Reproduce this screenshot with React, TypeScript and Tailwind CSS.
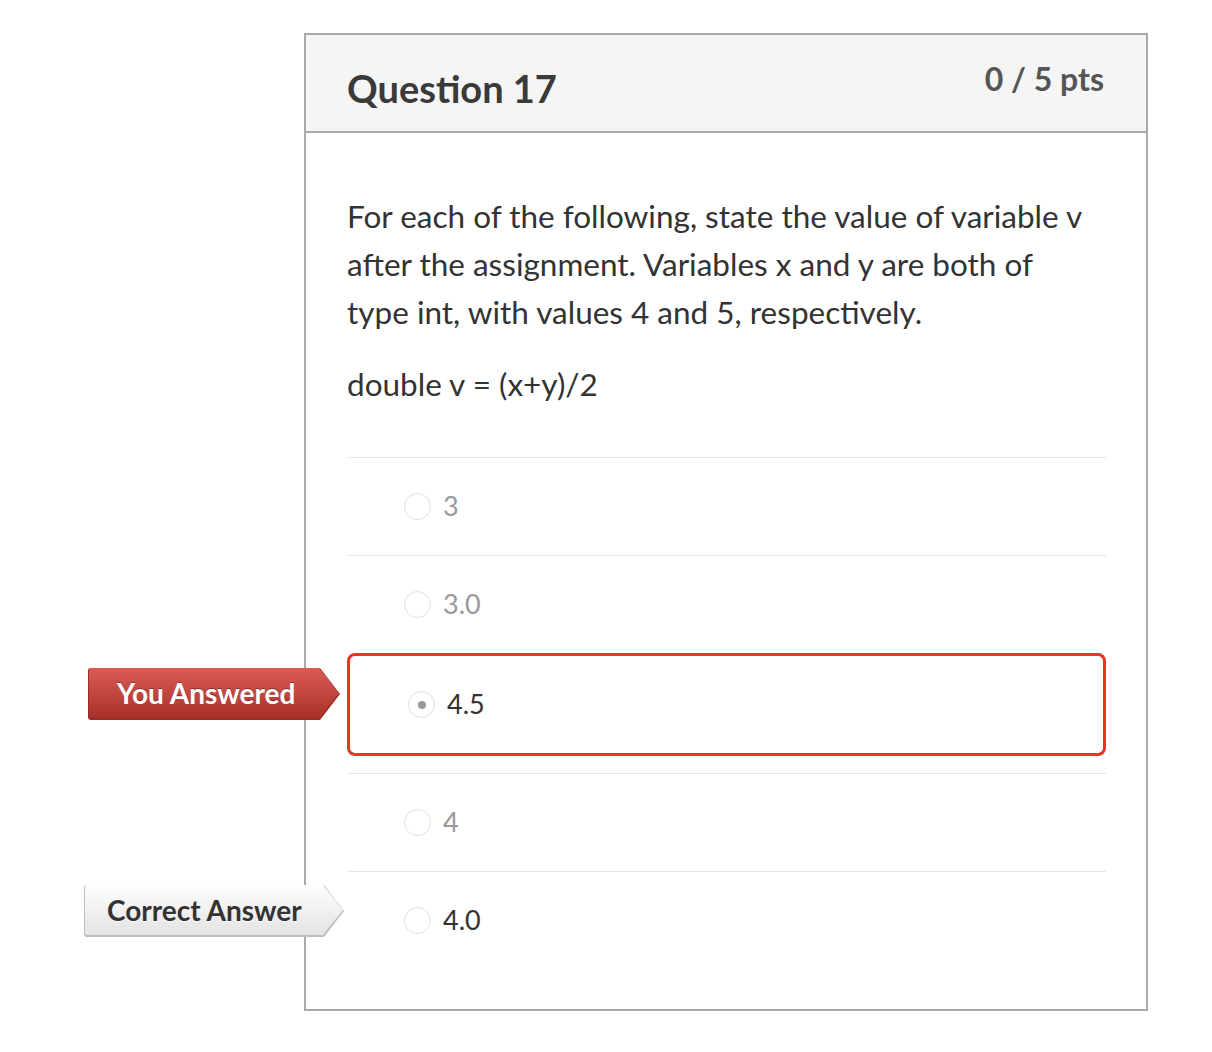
const tagClip = "[clip-path:polygon(0_0,calc(100%-20px)_0,100%_50%,calc(100%-20px)_100%,0_100%)]";

type Answer = { label: string; selected?: boolean; correct?: boolean };

const answers: Answer[] = [
  { label: "3" },
  { label: "3.0" },
  { label: "4.5", selected: true },
  { label: "4" },
  { label: "4.0", correct: true },
];

function Radio({ checked }: { checked?: boolean }) {
  return (
    <span className="flex h-[27px] w-[27px] shrink-0 items-center justify-center rounded-full border border-[#e0e0e0] bg-white shadow-[inset_0_1px_1px_rgba(0,0,0,0.03)]">
      {checked && <span className="h-[8px] w-[8px] rounded-full bg-[#9a9a9a]" />}
    </span>
  );
}

function YouAnsweredTag() {
  return (
    <div className="absolute left-[-262px] top-[11px] h-[52px] w-[252px]">
      <div className={`${tagClip} h-full w-full rounded-l-[3px] bg-[#9c2c26]`}>
        <div className={`${tagClip} ml-px mt-px flex h-[50px] w-[250px] items-center rounded-l-[2px] bg-gradient-to-b from-[#da5c55] to-[#a9302a] pl-[28px]`}>
          <span className="text-[28px] font-bold text-white [text-shadow:0_-1px_0_rgba(0,0,0,0.35)]">You Answered</span>
        </div>
      </div>
    </div>
  );
}

function CorrectTag() {
  return (
    <div className="absolute left-[-263px] top-[12px] h-[52px] w-[260px]">
      <div className={`${tagClip} h-full w-full rounded-l-[3px] bg-[#bdbdbd]`}>
        <div className={`${tagClip} ml-px mt-px flex h-[50px] w-[258px] items-center rounded-l-[2px] bg-gradient-to-b from-[#fefefe] to-[#e3e3e3] pl-[22px]`}>
          <span className="text-[28px] font-bold text-[#333] [text-shadow:0_1px_0_rgba(255,255,255,0.8)]">Correct Answer</span>
        </div>
      </div>
    </div>
  );
}

function AnswerRow({ answer }: { answer: Answer }) {
  if (answer.selected) {
    return (
      <div className="relative mb-[17px] flex h-[103px] items-center rounded-[8px] border-[3px] border-[#ea3424] pl-[58px]">
        <YouAnsweredTag />
        <Radio checked />
        <span className="ml-[12px] text-[27px] text-[#333]">{answer.label}</span>
      </div>
    );
  }
  return (
    <div className="relative flex h-[98px] items-center border-t border-[#e6e6e6] pl-[57px]">
      {answer.correct && <CorrectTag />}
      <Radio />
      <span className={`ml-[12px] text-[27px] ${answer.correct ? "text-[#333]" : "text-[#999]"}`}>{answer.label}</span>
    </div>
  );
}

export default function App() {
  return (
    <div className="min-h-[1052px] bg-white pl-[304px] pt-[33px] font-['Lato','Noto_Sans',sans-serif]">
      <div className="w-[844px] border-2 border-[#a9a9a9] bg-white">
        <div className="flex h-[98px] justify-between border-b-2 border-[#a9a9a9] bg-[#f5f5f5] pl-[41px] pr-[42px]">
          <h2 className="mt-[34px] text-[38px] font-bold leading-[38px] text-[#3a3a3a]">Question 17</h2>
          <span className="mt-[28px] text-[32px] font-bold leading-[32px] text-[#555]">0 / 5 pts</span>
        </div>
        <div className="pb-[40px] pl-[41px] pr-[40px] pt-[59px]">
          <p className="max-w-[745px] text-[31.5px] leading-[48px] text-[#333]">
            For each of the following, state the value of variable v after the assignment. Variables x and y are both of type int, with values 4 and 5, respectively.
          </p>
          <p className="mt-[24px] text-[31.5px] leading-[48px] text-[#333]">double v = (x+y)/2</p>
          <div className="mt-[49px]">
            {answers.map((a) => (
              <AnswerRow key={a.label} answer={a} />
            ))}
          </div>
        </div>
      </div>
    </div>
  );
}
